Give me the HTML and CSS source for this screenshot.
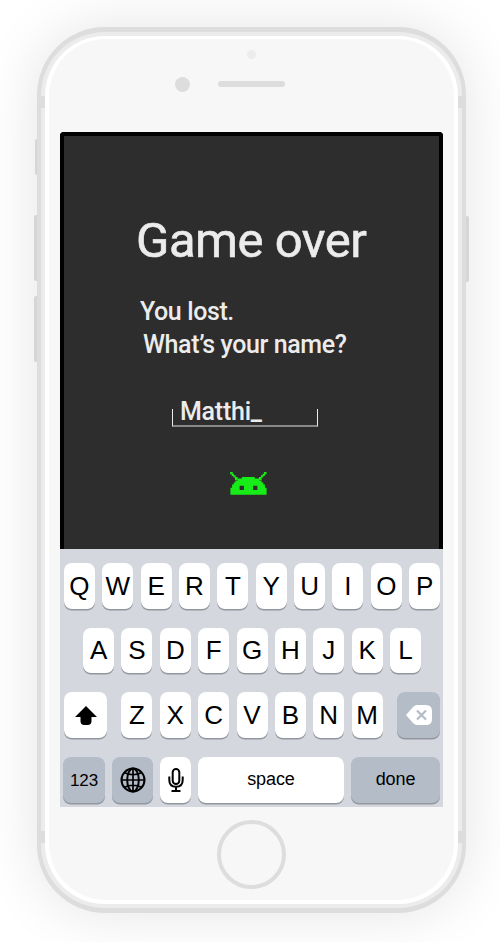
FILE: index.html
```html
<!DOCTYPE html>
<html lang="en">
<head>
<meta charset="utf-8">
<title>Game over</title>
<link rel="stylesheet" href="styles.css">
</head>
<body>
<div class="phone">
  <i class="side mute"></i><i class="side vol-up"></i><i class="side vol-down"></i><i class="side power"></i>
  <i class="band tl"></i><i class="band tr"></i><i class="band bl"></i><i class="band br"></i>
  <div class="rim"><div class="body">
    <header class="top">
      <i class="sensor"></i>
      <div class="ear"><i class="camera"></i><i class="speaker"></i></div>
    </header>
    <main class="screen">
      <section class="game">
        <h1>Game over</h1>
        <p class="lost">You lost.</p>
        <p class="ask">What’s your name?</p>
        <div class="field"><span>Matthi_</span></div>
        <svg class="droid" viewBox="210 246 112 70"><path fill="#18ec18" d="M210 246h8v7h-8zM215 251h7v7h-7zM220 256h7v7h-7zM225 261h8v9h-8zM313 246h8v7h-8zM309 251h7v7h-7zM304 256h7v7h-7zM298 261h8v9h-8z"/><path fill="#18ec18" fill-rule="evenodd" d="M246 261h39v5h14v6h7v6h5v6h5v10h5v21H211v-21h5v-10h5v-6h5v-6h7v-6h13zM239 288v13h13v-13zM280 288v13h13v-13z"/></svg>
      </section>
      <section class="keys">
        <div class="row"><b>Q</b><b>W</b><b>E</b><b>R</b><b>T</b><b>Y</b><b>U</b><b>I</b><b>O</b><b>P</b></div>
        <div class="row"><b>A</b><b>S</b><b>D</b><b>F</b><b>G</b><b>H</b><b>J</b><b>K</b><b>L</b></div>
        <div class="row spread">
          <b class="wide"><svg width="22" height="19" viewBox="0 0 22 19"><path d="M11 0 22 11h-5.500v4q0 4-4 4h-3q-4 0-4-4v-4H0z"/></svg></b>
          <div class="row inner"><b>Z</b><b>X</b><b>C</b><b>V</b><b>B</b><b>N</b><b>M</b></div>
          <b class="wide gray"><svg width="26" height="20" viewBox="0 0 26 20"><path fill="#fff" d="M0 10 7 2q2-2 4-2h9q6 0 6 6v8q0 6-6 6h-9q-2 0-4-2z"/><path d="m11 5.500 9 9m0-9-9 9" stroke="#b4bcc8" stroke-width="2.200"/></svg></b>
        </div>
        <div class="row bottom">
          <b class="gray small num">123</b>
          <b class="gray globe"><svg width="26" height="26" viewBox="0 0 26 26" fill="none" stroke="#000" stroke-width="2"><circle cx="13" cy="13" r="11.500"/><ellipse cx="13" cy="13" rx="5.800" ry="11.500"/><path d="M13 1.500v23M1.500 13h23M4 5.500q9 4.500 18 0M4 20.500q9-4.500 18 0" stroke-width="1.700"/></svg></b>
          <b class="mic"><svg width="16" height="24" viewBox="0 0 16 24" fill="none" stroke="#000" stroke-width="2"><rect x="4.700" y="1" width="6.600" height="15" rx="3.300"/><path d="M1.300 8.500V12q0 6.800 6.700 6.800t6.700-6.800V8.500M8 19v4M3.500 23h9"/></svg></b>
          <b class="small space">space</b>
          <b class="gray small done">done</b>
        </div>
      </section>
    </main>
    <i class="home"></i>
  </div></div>
</div>
</body>
</html>
```

FILE: styles.css
```css
* { box-sizing: border-box; }
html, body { margin: 0; height: 942px; overflow: hidden; background: #fff; }
i { display: block; }
.phone {
  position: relative;
  width: 429px;
  height: 886px;
  margin: 27px 0 0 37px;
  border: solid #ddd;
  border-width: 5px 4px;
  border-radius: 68px;
  background: #ececec;
  padding: 4px;
  box-shadow: 0 0 60px rgba(0, 0, 0, .11);
}
body { display: flex; align-items: flex-start; }
.rim { height: 868px; border-radius: 60px; background: #fff; padding: 3px 4px 4px; }
.body {
  height: 861px;
  border-radius: 57px;
  background: #f7f7f7;
  display: flex;
  flex-direction: column;
  padding: 0 11px;
}
.side { position: absolute; background: #d6d6d6; width: 3px; border-radius: 2px 0 0 2px; left: -7px; height: 66px; }
.mute { top: 107px; height: 36px; left: -6px; width: 2px; }
.vol-up { top: 183px; }
.vol-down { top: 264px; }
.power { left: auto; right: -7px; top: 184px; border-radius: 0 2px 2px 0; }
.band { position: absolute; width: 4px; height: 12px; background: #ddd; }
.tl { left: 0; top: 64px; }
.tr { right: 0; top: 64px; }
.bl { left: 0; top: 799px; }
.br { right: 0; top: 799px; }

.top { height: 93px; padding-top: 11px; }
.sensor { width: 9px; height: 9px; border-radius: 50%; background: #ececec; margin-left: 187px; }
.ear { display: flex; align-items: flex-start; gap: 28px; margin: 18px 0 0 115px; }
.camera { width: 15px; height: 15px; border-radius: 50%; background: #ddd; }
.speaker { width: 67px; height: 6px; border-radius: 3px; background: #ddd; margin-top: 4px; }

.screen { width: 383px; height: 675px; flex: none; }
.game {
  height: 417px;
  border: 4px solid #000;
  border-bottom: 0;
  border-radius: 4px 4px 0 0;
  background: #2d2d2d;
  color: #ececec;
  font-family: Roboto, sans-serif;
}
h1 { margin: 75px 0 0 72px; font-size: 49px; line-height: 60px; font-weight: 400; letter-spacing: -.5px; -webkit-text-stroke: .6px #ececec; white-space: nowrap; }
p { margin: 0; font-size: 25px; line-height: 33px; font-weight: 500; letter-spacing: -.4px; white-space: nowrap; }
.lost { padding: 24px 0 0 76px; }
.ask { padding-left: 79px; }
.field {
  width: 146px;
  height: 18px;
  margin: 48px 0 0 108px;
  border: solid #ececec;
  border-width: 0 1px;
  border-bottom: 2px solid #888;
  padding-left: 7px;
  font-size: 25px;
  line-height: 5px;
  font-weight: 500;
  letter-spacing: -.25px;
}
.droid { display: block; width: 37px; height: 23px; margin: 45px 0 0 166px; }

.keys {
  height: 258px;
  background: #d4d7de;
  padding: 14px 3px 0 4px;
  font-family: "Liberation Sans", sans-serif;
  display: flex;
  flex-direction: column;
  gap: 17.700px;
}
.row { display: flex; justify-content: center; gap: 7.370px; height: 47px; }
.spread { justify-content: space-between; }
.keys b {
  width: 31px;
  height: 45.500px;
  flex: none;
  border-radius: 8px;
  background: #fff;
  box-shadow: 0 1.500px 0 #92969d;
  font-size: 26px;
  font-weight: 400;
  color: #000;
  display: flex;
  align-items: center;
  justify-content: center;
  padding-top: 1px;
}
.keys .wide { width: 43px; padding: 0; }
.keys .gray { background: #b4bcc8; }
.keys .small { font-size: 18px; letter-spacing: -.1px; padding: 0; }
.bottom { gap: 7px; justify-content: space-between; margin-left: -1px; }
.keys .num { width: 42px; font-size: 17px; padding-top: 2px; }
.keys .globe { width: 41px; }
.keys .space { width: 146px; }
.keys .done { width: 89px; }

.home { width: 69px; height: 69px; border: 4px solid #ddd; border-radius: 50%; margin: 13px 0 0 157px; }
```
